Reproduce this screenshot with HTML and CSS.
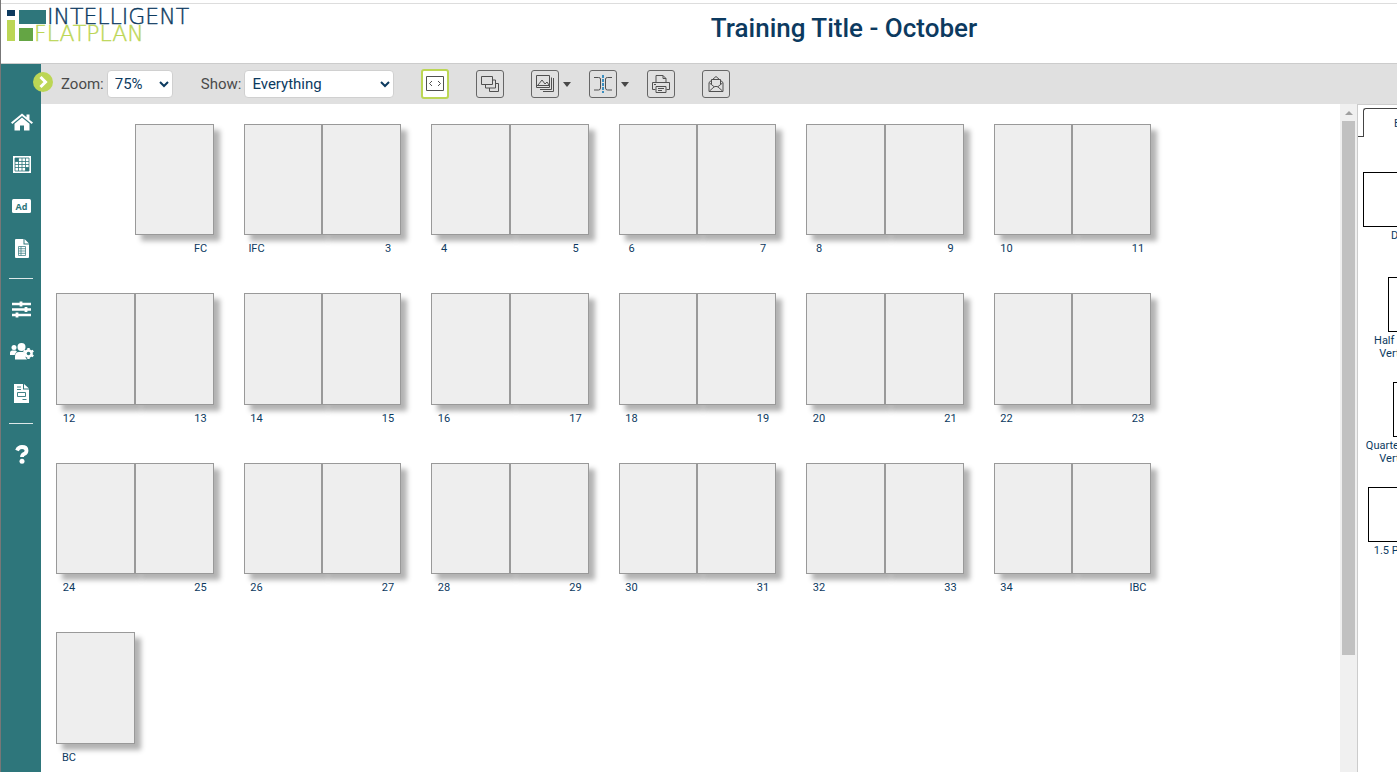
FILE: index.html
```html
<!DOCTYPE html>
<html lang="en">
<head>
<meta charset="utf-8">
<title>Training Title - October</title>
<link rel="stylesheet" href="styles.css">
<script src="pages.js" defer></script>
</head>
<body>
<header class="header">
  <a class="logo" href="#" aria-label="Intelligent Flatplan">
    <svg class="logo-svg" viewBox="0 0 200 36" role="img">
      <path fill="#0c3a5f" d="M0 3h8v6H0z"/>
      <path fill="#2e767b" d="M12 3h27v14H12z"/>
      <path fill="#bcd655" d="M0 13h8v21H0z"/>
      <path fill="#64a544" d="M12 21h14v13H12z"/>
      <text class="logo-top" x="40" y="17">INTELLIGENT</text>
      <text class="logo-bottom" x="27" y="34">FLATPLAN</text>
    </svg>
  </a>
  <h1 class="title">Training Title - October</h1>
</header>
<div class="shell">
  <nav class="sidebar" aria-label="Main">
    <button class="expand" aria-label="Expand menu"><svg width="20" height="20" viewBox="0 0 20 20"><path d="M7.500 5l5 5-5 5" fill="none" stroke="#fff" stroke-width="3"/></svg></button>
    <a class="nav-item" href="#" aria-label="Home"><svg width="22" height="18" viewBox="0 0 22 18"><path fill="#fff" d="M11 4.500l7.500 6.300V17.500h-5.500v-5H9v5H3.500v-6.700zM11 .5l4.500 3.800V1.500H18.500v5.200L22 9.500l-1.300 1.600L11 3 1.300 11.100 0 9.500z"/></svg></a>
    <a class="nav-item" href="#" aria-label="Flatplan"><svg width="18" height="17" viewBox="0 0 18 17"><path fill="#fff" d="M0 0h18v17H0z"/><path stroke="#2e767b" d="M2 5.500h14M2 8.500h14M2 11.500h14M5.500 2v13M9 2v13M12.500 2v13M2 2h14v13H2z" fill="none" stroke-width=".8"/><path fill="#2e767b" d="M2 2h3.500v3.500H2zM12.500 11.500H16V15h-3.500z"/></svg></a>
    <a class="nav-item" href="#" aria-label="Ads"><svg width="19" height="14" viewBox="0 0 19 14"><rect width="19" height="14" rx="1.500" fill="#fff"/><text class="ad-text" x="9.500" y="10.500">Ad</text></svg></a>
    <a class="nav-item" href="#" aria-label="Reports"><svg width="14" height="19" viewBox="0 0 14 19"><path fill="#fff" d="M1 0h7.500v5.500H14V18q0 1-1 1H1q-1 0-1-1V1q0-1 1-1zM9.500 0L14 4.500H9.500z"/><path d="M3.500 7.500h7v9h-7zM3.500 9.700h7M3.500 12h7M3.500 14.300h7M6 7.500v9" fill="none" stroke="#2e767b" stroke-width=".7"/></svg></a>
    <hr class="rule">
    <a class="nav-item" href="#" aria-label="Settings"><svg width="19" height="17" viewBox="0 0 19 17"><path d="M0 3h19M0 8.500h19M0 14h19" stroke="#fff" stroke-width="2.600"/><path d="M9 0.500v5M14 6v5M5 11.500v5" stroke="#fff" stroke-width="2.800"/></svg></a>
    <a class="nav-item" href="#" aria-label="User settings"><svg width="24" height="17" viewBox="0 0 24 17"><g fill="#fff"><circle cx="4" cy="4.500" r="2.500"/><circle cx="11.500" cy="4" r="4"/><path d="M0 12V10q0-2.500 2.500-2.500H5.500L7 8.500Q5 10 4.700 12zM5 16.500V13.500Q5 9 9 9h4.500l2 1q-1.500 3 1.500 6.500z"/><circle cx="18.500" cy="10.500" r="4.300"/></g><path d="M18.500 5v11M13.700 7.700l9.600 5.600M13.700 13.300l9.600-5.600" stroke="#fff" stroke-width="2.400"/><circle cx="18.500" cy="10.500" r="1.800" fill="#2e767b"/></svg></a>
    <a class="nav-item" href="#" aria-label="Documents"><svg width="15" height="19" viewBox="0 0 15 19"><path fill="#fff" d="M0 0h9v5.500h6V19H0zM10 0l5 4.500h-5z"/><path d="M3 3h4M3 5.500h4M3.500 8.500h8v4h-8zM8.500 15.500h4" fill="none" stroke="#2e767b" stroke-width=".9"/></svg></a>
    <hr class="rule">
    <a class="nav-item" href="#" aria-label="Help"><svg width="14" height="19" viewBox="0 0 14 19"><path d="M2 5.500Q3.500 2 7 2q4.500 0 4.500 3.500Q11.500 8 9 9q-2 1-2 3" fill="none" stroke="#fff" stroke-width="3.800"/><circle cx="7" cy="16.300" r="2.500" fill="#fff"/></svg></a>
  </nav>
  <main class="main">
    <div class="toolbar">
      <label class="tool-label" for="zoom">Zoom:</label>
      <select class="select zoom-select" id="zoom"><option>75%</option><option>100%</option></select>
      <label class="tool-label show-label" for="show">Show:</label>
      <select class="select show-select" id="show"><option>Everything</option></select>
      <div class="tools">
        <button class="tool tool-active" aria-label="Spreads"><svg width="20" height="18" viewBox="0 0 20 18"><path d="M1.500 1.500h17v14h-17zM7 6L4.500 8.500 7 11M13 6L15.500 8.500 13 11"/></svg></button>
        <button class="tool" aria-label="Pages"><svg width="20" height="18" viewBox="0 0 20 18"><path d="M1.500 1.500h11v8h-11zM5.500 10v3h10v-8h-3M9.500 13v3.500h9V8.500h-3"/></svg></button>
        <div class="tool-group">
          <button class="tool" aria-label="Images"><svg width="20" height="18" viewBox="0 0 20 18"><path d="M1.500 .5h13v12h-13zM2 10.500h12M3 10l4-5 3 4 2-2 2 3M5 14.500h11.500v-12M8 16.500h10.500V3"/></svg></button>
          <button class="caret" aria-label="Image options"><svg width="8" height="5" viewBox="0 0 8 5"><path d="M0 0h8L4 5z"/></svg></button>
        </div>
        <div class="tool-group">
          <button class="tool" aria-label="Split"><svg width="20" height="18" viewBox="0 0 20 18"><path d="M1 2.500h4.500q2 0 2 1.500v9q0 2-2 2H1M19 2.500h-4.500q-2 0-2 1.500v9q0 2 2 2H19"/><path class="split-line" d="M10 0v18"/></svg></button>
          <button class="caret" aria-label="Split options"><svg width="8" height="5" viewBox="0 0 8 5"><path d="M0 0h8L4 5z"/></svg></button>
        </div>
        <button class="tool" aria-label="Print"><svg width="20" height="18" viewBox="0 0 20 18"><path d="M5 7.500v-7h7l3 3v4M12 .5v3h3M4.500 14.500h-3v-7h17v7h-3M5 11.500h10v6H5zM7 13.500h6M7 15.500h4M3 9.500h2"/></svg></button>
        <button class="tool" aria-label="Mail"><svg width="18" height="18" viewBox="0 0 18 18"><path d="M2 7.500l7-6 7 6v9H2zM4.500 9V4.500h9V9M2.500 8l5 4M15.500 8l-5 4M2.500 16l5-4.500h3l5 4.500"/></svg></button>
      </div>
    </div>
    <div class="content">
      <div class="workspace" id="workspace"></div>
      <div class="scrollbar" aria-hidden="true">
        <svg width="17" height="17" viewBox="0 0 17 17"><path d="M5 11h8L9 7z" fill="#a0a0a0"/></svg>
        <div class="scroll-track"><div class="scroll-thumb"></div></div>
      </div>
      <aside class="panel">
        <div class="panel-inner">
          <div class="tabs"><button class="tab">E</button></div>
          <div class="sizes">
            <div class="size"><div class="shape shape-dps"></div>DP</div>
            <div class="size"><div class="shape shape-half"></div>Half Page Vertical</div>
            <div class="size"><div class="shape shape-quarter"></div>Quarter Page Vertical</div>
            <div class="size"><div class="shape shape-wide"></div>1.5 Pages</div>
          </div>
        </div>
      </aside>
    </div>
  </main>
</div>
</body>
</html>
```
FILE: styles.css
```css
* { box-sizing: border-box; }
body {
  margin: 0;
  height: 100vh;
  display: flex;
  flex-direction: column;
  overflow: hidden;
  border-left: 1px solid #777;
  background: #fff;
  color: #0c3a5f;
  font-family: Roboto, "Liberation Sans", sans-serif;
}
button { padding: 0; border: 0; background: none; font: inherit; color: inherit; }
svg { display: block; flex: none; }

.header {
  flex: none;
  display: grid;
  grid-template-columns: 290px 1fr;
  margin-top: 3px;
  height: 61px;
  border-top: 1px solid #ddd;
  border-bottom: 1px solid #ccc;
}
.logo { padding: 3px 0 0 6px; }
.logo-svg { width: 200px; height: 36px; overflow: visible; }
.logo-top, .logo-bottom { font-family: "DejaVu Sans", sans-serif; font-weight: 200; font-size: 22px; stroke-width: 0.4px; }
.logo-top { fill: #0c3a5f; stroke: #0c3a5f; }
.logo-bottom { fill: #bcd655; stroke: #bcd655; }
.title { margin: 0; padding-top: 8px; font-size: 26px; line-height: 32px; font-weight: 500; text-align: center; }

.shell { flex: 1; display: flex; min-height: 0; }
.sidebar {
  position: relative;
  flex: none;
  width: 40px;
  padding-top: 37px;
  background: #2e767b;
}
.expand { position: absolute; top: 8px; left: 32px; width: 20px; height: 20px; border-radius: 50%; background: #bcd655; }
.nav-item { display: flex; align-items: center; justify-content: center; height: 42px; padding-left: 1px; }
.ad-text { fill: #2e767b; font-family: "Open Sans", sans-serif; font-weight: 700; font-size: 9px; text-anchor: middle; }
.rule { width: 24px; height: 1px; margin: 9px auto; border: 0; background: #dce8e8; }

.main { flex: 1; min-width: 0; display: flex; flex-direction: column; }
.toolbar { flex: none; display: flex; align-items: center; height: 40px; padding-left: 20px; background: #e0e0e0; }
.tool-label { color: #4a4a4a; font-size: 15px; }
.show-label { margin-left: 28px; }
.select {
  height: 28px;
  margin-left: 3px;
  padding: 0 4px 0 3px;
  border: 1px solid #d0d0d0;
  border-radius: 4px;
  background: #fff;
  color: #0c3a5f;
  font-family: inherit;
  font-size: 15px;
}
.zoom-select { width: 66px; }
.show-select { width: 150px; }
.tools { display: flex; align-items: center; gap: 27px; margin-left: 27px; }
.tool-group { display: flex; align-items: center; gap: 4px; margin-right: -9px; }
.tool {
  display: flex;
  align-items: center;
  justify-content: center;
  width: 28px;
  height: 28px;
  border: 1px solid #666;
  border-radius: 3px;
}
.tool-active { height: 30px; border: 2px solid #bcd655; background: #fff; }
.tool path { fill: none; stroke: #505050; }
.tool .split-line { stroke: #3c8fc0; stroke-width: 2px; stroke-dasharray: 3 1; }
.caret path { fill: #484848; }

.content { flex: 1; min-height: 0; display: flex; }
.workspace {
  flex: 1;
  min-width: 0;
  overflow: hidden;
  display: grid;
  grid-template-columns: repeat(6, 1fr);
  align-content: start;
  gap: 38px 30px;
  padding: 20px 189px 0 15px;
}
.spread { display: grid; grid-template-columns: 1fr 1fr; }
.page { display: flex; flex-direction: column; }
.page-right { grid-column: 2; align-items: flex-end; }
.sheet { width: 100%; aspect-ratio: 210 / 297; border: 1px solid #999; background: #eee; box-shadow: 6px 6px 5px rgba(0, 0, 0, 0.3); }
.page-right .sheet { position: relative; }
.page-label { width: 26px; margin-top: 7px; font-size: 11px; line-height: 13px; text-align: center; }

.scrollbar { flex: none; width: 17px; display: flex; flex-direction: column; background: #f0f0f0; }
.scroll-track { flex: 1; padding: 0 2px; }
.scroll-thumb { height: 82%; background: #c1c1c1; }

.panel { flex: none; width: 40px; overflow: hidden; border-left: 1px solid #ccc; border-top: 1px solid #ccc; }
.panel-inner { width: 80px; padding-top: 3px; }
.tabs { display: flex; }
.tabs::before { content: ""; width: 5px; border-bottom: 1px solid #444; }
.tab { flex: 1; height: 29px; padding-left: 30px; border: solid #444; border-width: 1px 0 0 1px; border-radius: 3px 0 0; font-size: 11px; text-align: left; }
.sizes { display: grid; grid-auto-rows: 105px; padding-top: 35px; }
.size { padding: 0 5px; font-size: 11px; line-height: 13px; text-align: center; }
.shape { height: 55px; margin: 0 auto 2px; border: 1px solid #000; }
.shape-dps { width: 70px; }
.shape-half { width: 20px; }
.shape-quarter { width: 10px; }
.shape-wide { width: 60px; }
```
FILE: pages.js
```js
const spreads = [[null, 'FC'], ['IFC', '3']];
for (let n = 4; n < 34; n += 2) spreads.push([String(n), String(n + 1)]);
spreads.push(['34', 'IBC'], ['BC', null]);

const workspace = document.getElementById('workspace');
for (const pair of spreads) {
  const spread = document.createElement('div');
  spread.className = 'spread';
  pair.forEach((name, side) => {
    if (!name) return;
    const page = document.createElement('div');
    page.className = side ? 'page page-right' : 'page';
    const sheet = document.createElement('div');
    sheet.className = 'sheet';
    const label = document.createElement('div');
    label.className = 'page-label';
    label.textContent = name;
    page.append(sheet, label);
    spread.append(page);
  });
  workspace.append(spread);
}
```
